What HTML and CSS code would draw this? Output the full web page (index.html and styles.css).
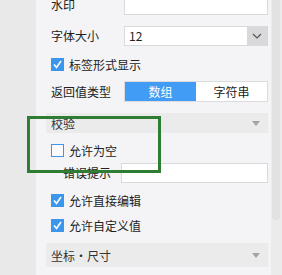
FILE: index.html
```html
<!DOCTYPE html>
<html lang="zh">
<head>
  <meta charset="UTF-8" />
  <title>属性面板</title>
  <link rel="stylesheet" href="styles.css">
</head>
<body>
  <div class="app">
    <div class="side"></div>

    <div class="panel">
      <div class="row row-watermark">
        <span class="label">水印</span>
        <input class="text-input" type="text">
      </div>

      <div class="row row-size">
        <span class="label">字体大小</span>
        <div class="select">
          <span class="select-value">12</span>
          <span class="select-btn">
            <svg width="10" height="6" viewBox="0 0 10 6"><path d="M1 1 L5 5 L9 1" fill="none" stroke="#555" stroke-width="1.2"/></svg>
          </span>
        </div>
      </div>

      <div class="row check-row row-tag">
        <span class="check checked"></span>
        <span>标签形式显示</span>
      </div>

      <div class="row row-return">
        <span class="label">返回值类型</span>
        <div class="segment">
          <span class="seg active">数组</span>
          <span class="seg">字符串</span>
        </div>
      </div>

      <div class="band band-check">
        <span>校验</span>
        <span class="tri"></span>
      </div>

      <div class="row check-row row-empty">
        <span class="check"></span>
        <span>允许为空</span>
      </div>

      <div class="row row-error">
        <span class="label label-sub">错误提示</span>
        <input class="text-input" type="text">
      </div>

      <div class="row check-row row-edit">
        <span class="check checked"></span>
        <span>允许直接编辑</span>
      </div>

      <div class="row check-row row-custom">
        <span class="check checked"></span>
        <span>允许自定义值</span>
      </div>

      <div class="band band-pos">
        <span>坐标・尺寸</span>
        <span class="tri"></span>
      </div>
    </div>

    <div class="scrollbar">
      <div class="thumb"></div>
    </div>

    <div class="highlight"></div>
  </div>
</body>
</html>
```

FILE: styles.css
```css
* {
  margin: 0;
  padding: 0;
  box-sizing: border-box;
}
body {
  font-family: "Noto Sans CJK SC", "Liberation Sans", sans-serif;
  font-size: 12px;
  color: #222;
  background: #f4f4f6;
}
.app {
  position: relative;
  display: flex;
  width: 282px;
  height: 275px;
  overflow: hidden;
}
.side {
  flex: none;
  width: 36px;
  background: #e9e9ea;
}
.panel {
  flex: none;
  width: 235px;
  padding: 0 3px 0 10px;
  background: #f4f4f6;
}
.scrollbar {
  flex: none;
  width: 11px;
  background: #ebebec;
  padding-left: 1px;
}
.thumb {
  width: 8px;
  height: 220px;
  background: #e2e2e4;
  border-radius: 0 0 4px 4px;
}

.row {
  display: flex;
  align-items: center;
  height: 20px;
  padding-left: 5px;
  white-space: nowrap;
}
.label {
  flex: none;
  width: 73px;
  line-height: 20px;
}
.label-sub {
  width: 58px;
  margin-left: 12px;
}
.text-input {
  flex: 1;
  width: 0;
  min-width: 0;
  height: 20px;
  border: 1px solid #d9d9db;
  background: #fff;
  outline: none;
}

.row-watermark { margin-top: -5px; }
.row-size { margin-top: 11px; }
.row-tag { margin-top: 8px; }
.row-return { margin-top: 7px; height: 21px; }
.band-check { margin-top: 11px; height: 20px; }
.row-empty { margin-top: 7px; }
.row-error { margin-top: 3px; }
.row-edit { margin-top: 7px; }
.row-custom { margin-top: 5px; }
.band-pos { margin-top: 8px; height: 24px; }

.select {
  flex: 1;
  display: flex;
  height: 20px;
  border: 1px solid #d9d9db;
  background: #fff;
}
.select-value {
  flex: 1;
  padding-left: 4px;
  line-height: 18px;
}
.select-btn {
  width: 20px;
  display: flex;
  align-items: center;
  justify-content: center;
  background: #d9d9dc;
}

.check-row span + span {
  margin-left: 5px;
}
.check {
  flex: none;
  width: 13px;
  height: 13px;
  border: 1px solid #3c96ee;
  background: #fbfbfd;
}
.check.checked {
  background: #3c96ee
    url("data:image/svg+xml;utf8,<svg xmlns='http://www.w3.org/2000/svg' width='13' height='13'><path d='M3 6.5 L5.5 9.5 L10 3' fill='none' stroke='white' stroke-width='1.6'/></svg>")
    no-repeat center;
}

.segment {
  flex: 1;
  display: flex;
  height: 21px;
  border: 1px solid #dcdcde;
  background: #fff;
}
.seg {
  flex: 1;
  text-align: center;
  line-height: 19px;
}
.seg.active {
  background: #409cf5;
  color: #fff;
}

.band {
  display: flex;
  align-items: center;
  justify-content: space-between;
  padding: 0 8px 0 5px;
  background: #ebebeb;
  color: #333;
}
.tri {
  width: 0;
  height: 0;
  border-left: 4px solid transparent;
  border-right: 4px solid transparent;
  border-top: 5px solid #a3a3a3;
}

.highlight {
  position: absolute;
  left: 27px;
  top: 116px;
  width: 134px;
  height: 57px;
  border: 3px solid #2f7d33;
}
```
